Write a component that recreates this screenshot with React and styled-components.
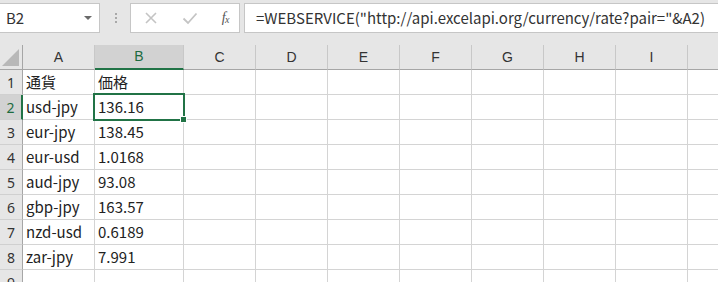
import React from "react";
import styled, { createGlobalStyle } from "styled-components";

const GlobalStyle = createGlobalStyle`
  body {
    margin: 0;
    background: #ffffff;
    font-family: "Noto Sans CJK JP", "Noto Sans", sans-serif;
    overflow: hidden;
  }
`;

const Page = styled.div`
  width: 718px;
  height: 282px;
  overflow: hidden;
  background: #ffffff;
`;

const FormulaBar = styled.div`
  display: flex;
  align-items: center;
  height: 45px;
  padding-bottom: 10px;
  box-sizing: border-box;
  background: #e6e6e6;
`;

const NameBox = styled.div`
  display: flex;
  align-items: center;
  justify-content: space-between;
  width: 100px;
  height: 30px;
  box-sizing: border-box;
  padding: 0 7px 0 6px;
  background: #ffffff;
  border: 1px solid #c6c6c6;
  border-left: none;
  font-size: 15px;
  color: #333333;
`;

const Caret = styled.span`
  width: 0;
  height: 0;
  border-left: 4px solid transparent;
  border-right: 4px solid transparent;
  border-top: 4px solid #6a6a6a;
`;

const Dots = styled.div`
  display: flex;
  flex-direction: column;
  gap: 2px;
  margin: 0 13px 0 15px;
  span {
    width: 2px;
    height: 2px;
    background: #a8a8a8;
  }
`;

const FuncButtons = styled.div`
  display: flex;
  align-items: center;
  justify-content: space-between;
  width: 110px;
  height: 30px;
  box-sizing: border-box;
  padding: 0 10px 0 13px;
  background: #ffffff;
  border: 1px solid #c6c6c6;
  margin-right: 4px;
`;

const Fx = styled.span`
  font-family: "Liberation Serif", serif;
  font-style: italic;
  font-size: 14px;
  color: #555555;
  letter-spacing: -0.5px;
  sub {
    font-size: 10px;
    vertical-align: -1px;
  }
`;

const FormulaInput = styled.div`
  flex: 1;
  height: 30px;
  box-sizing: border-box;
  display: flex;
  align-items: center;
  padding-left: 11px;
  background: #ffffff;
  border: 1px solid #c6c6c6;
  border-right: none;
  font-size: 15px;
  color: #333333;
  white-space: nowrap;
  overflow: hidden;
`;

const Sheet = styled.div`
  display: grid;
  grid-template-columns: 23px 72px 89px repeat(8, 72px);
  grid-auto-rows: 25px;
`;

const Cell = styled.div`
  position: relative;
  box-sizing: border-box;
  display: flex;
  align-items: center;
  padding: 0 0 1px 3px;
  border-right: 1px solid #d4d4d4;
  border-bottom: 1px solid #d4d4d4;
  font-size: 15px;
  color: #222222;
  white-space: nowrap;

  ${(p) =>
    p.$active &&
    `
    &::after {
      content: "";
      position: absolute;
      top: -2px;
      left: -2px;
      right: -2px;
      bottom: -2px;
      border: 2px solid #217346;
      z-index: 2;
    }
    &::before {
      content: "";
      position: absolute;
      right: -4px;
      bottom: -4px;
      width: 5px;
      height: 5px;
      background: #217346;
      border: 1px solid #ffffff;
      z-index: 3;
    }
  `}
`;

const ColHead = styled.div`
  box-sizing: border-box;
  display: flex;
  align-items: center;
  justify-content: center;
  padding-bottom: 1px;
  font-family: "Liberation Sans", Arial, sans-serif;
  font-size: 14px;
  color: ${(p) => (p.$selected ? "#1d6b3f" : "#333333")};
  background: ${(p) => (p.$selected ? "#d2d2d2" : "#e6e6e6")};
  border-right: 1px solid #c8c8c8;
  border-bottom: ${(p) => (p.$selected ? "2px solid #217346" : "1px solid #a6a6a6")};
`;

const RowHead = styled.div`
  box-sizing: border-box;
  display: flex;
  align-items: center;
  justify-content: center;
  font-family: "Noto Sans", sans-serif;
  font-size: 14px;
  color: ${(p) => (p.$selected ? "#1d6b3f" : "#333333")};
  background: ${(p) => (p.$selected ? "#d2d2d2" : "#e6e6e6")};
  border-bottom: 1px solid #d0d0d0;
  border-right: ${(p) => (p.$selected ? "2px solid #217346" : "1px solid #a6a6a6")};
`;

const Corner = styled.div`
  box-sizing: border-box;
  display: flex;
  align-items: flex-end;
  justify-content: flex-end;
  padding: 0 3px 3px 0;
  background: #e6e6e6;
  border-right: 1px solid #a6a6a6;
  border-bottom: 1px solid #a6a6a6;
  span {
    width: 17px;
    height: 17px;
    background: #b8b8b8;
    clip-path: polygon(100% 0, 100% 100%, 0 100%);
  }
`;

// the tenth column lies mostly past the window edge, its letter is not seen
const columns = ["A", "B", "C", "D", "E", "F", "G", "H", "I", ""];

const rows = [
  ["通貨", "価格"],
  ["usd-jpy", "136.16"],
  ["eur-jpy", "138.45"],
  ["eur-usd", "1.0168"],
  ["aud-jpy", "93.08"],
  ["gbp-jpy", "163.57"],
  ["nzd-usd", "0.6189"],
  ["zar-jpy", "7.991"],
  ["", ""],
];

const CrossIcon = () => (
  <svg width="14" height="14" viewBox="0 0 14 14">
    <path d="M2 2 L12 12 M12 2 L2 12" stroke="#c4c4c4" strokeWidth="1.6" fill="none" />
  </svg>
);

const CheckIcon = () => (
  <svg width="16" height="14" viewBox="0 0 16 14">
    <path d="M1.5 7.5 L6 12 L14.5 2.5" stroke="#c4c4c4" strokeWidth="1.8" fill="none" />
  </svg>
);

export default function App() {
  return (
    <Page>
      <GlobalStyle />
      <FormulaBar>
        <NameBox>
          <span>B2</span>
          <Caret />
        </NameBox>
        <Dots>
          <span />
          <span />
          <span />
        </Dots>
        <FuncButtons>
          <CrossIcon />
          <CheckIcon />
          <Fx>
            f<sub>x</sub>
          </Fx>
        </FuncButtons>
        <FormulaInput>=WEBSERVICE("http://api.excelapi.org/currency/rate?pair="&amp;A2)</FormulaInput>
      </FormulaBar>
      <Sheet>
        <Corner>
          <span />
        </Corner>
        {columns.map((c, j) => (
          <ColHead key={j} $selected={c === "B"}>
            {c}
          </ColHead>
        ))}
        {rows.map((r, i) => (
          <React.Fragment key={i}>
            <RowHead $selected={i === 1}>{i + 1}</RowHead>
            {columns.map((c, j) => (
              <Cell key={j} $active={i === 1 && j === 1}>
                {r[j] || ""}
              </Cell>
            ))}
          </React.Fragment>
        ))}
      </Sheet>
    </Page>
  );
}
